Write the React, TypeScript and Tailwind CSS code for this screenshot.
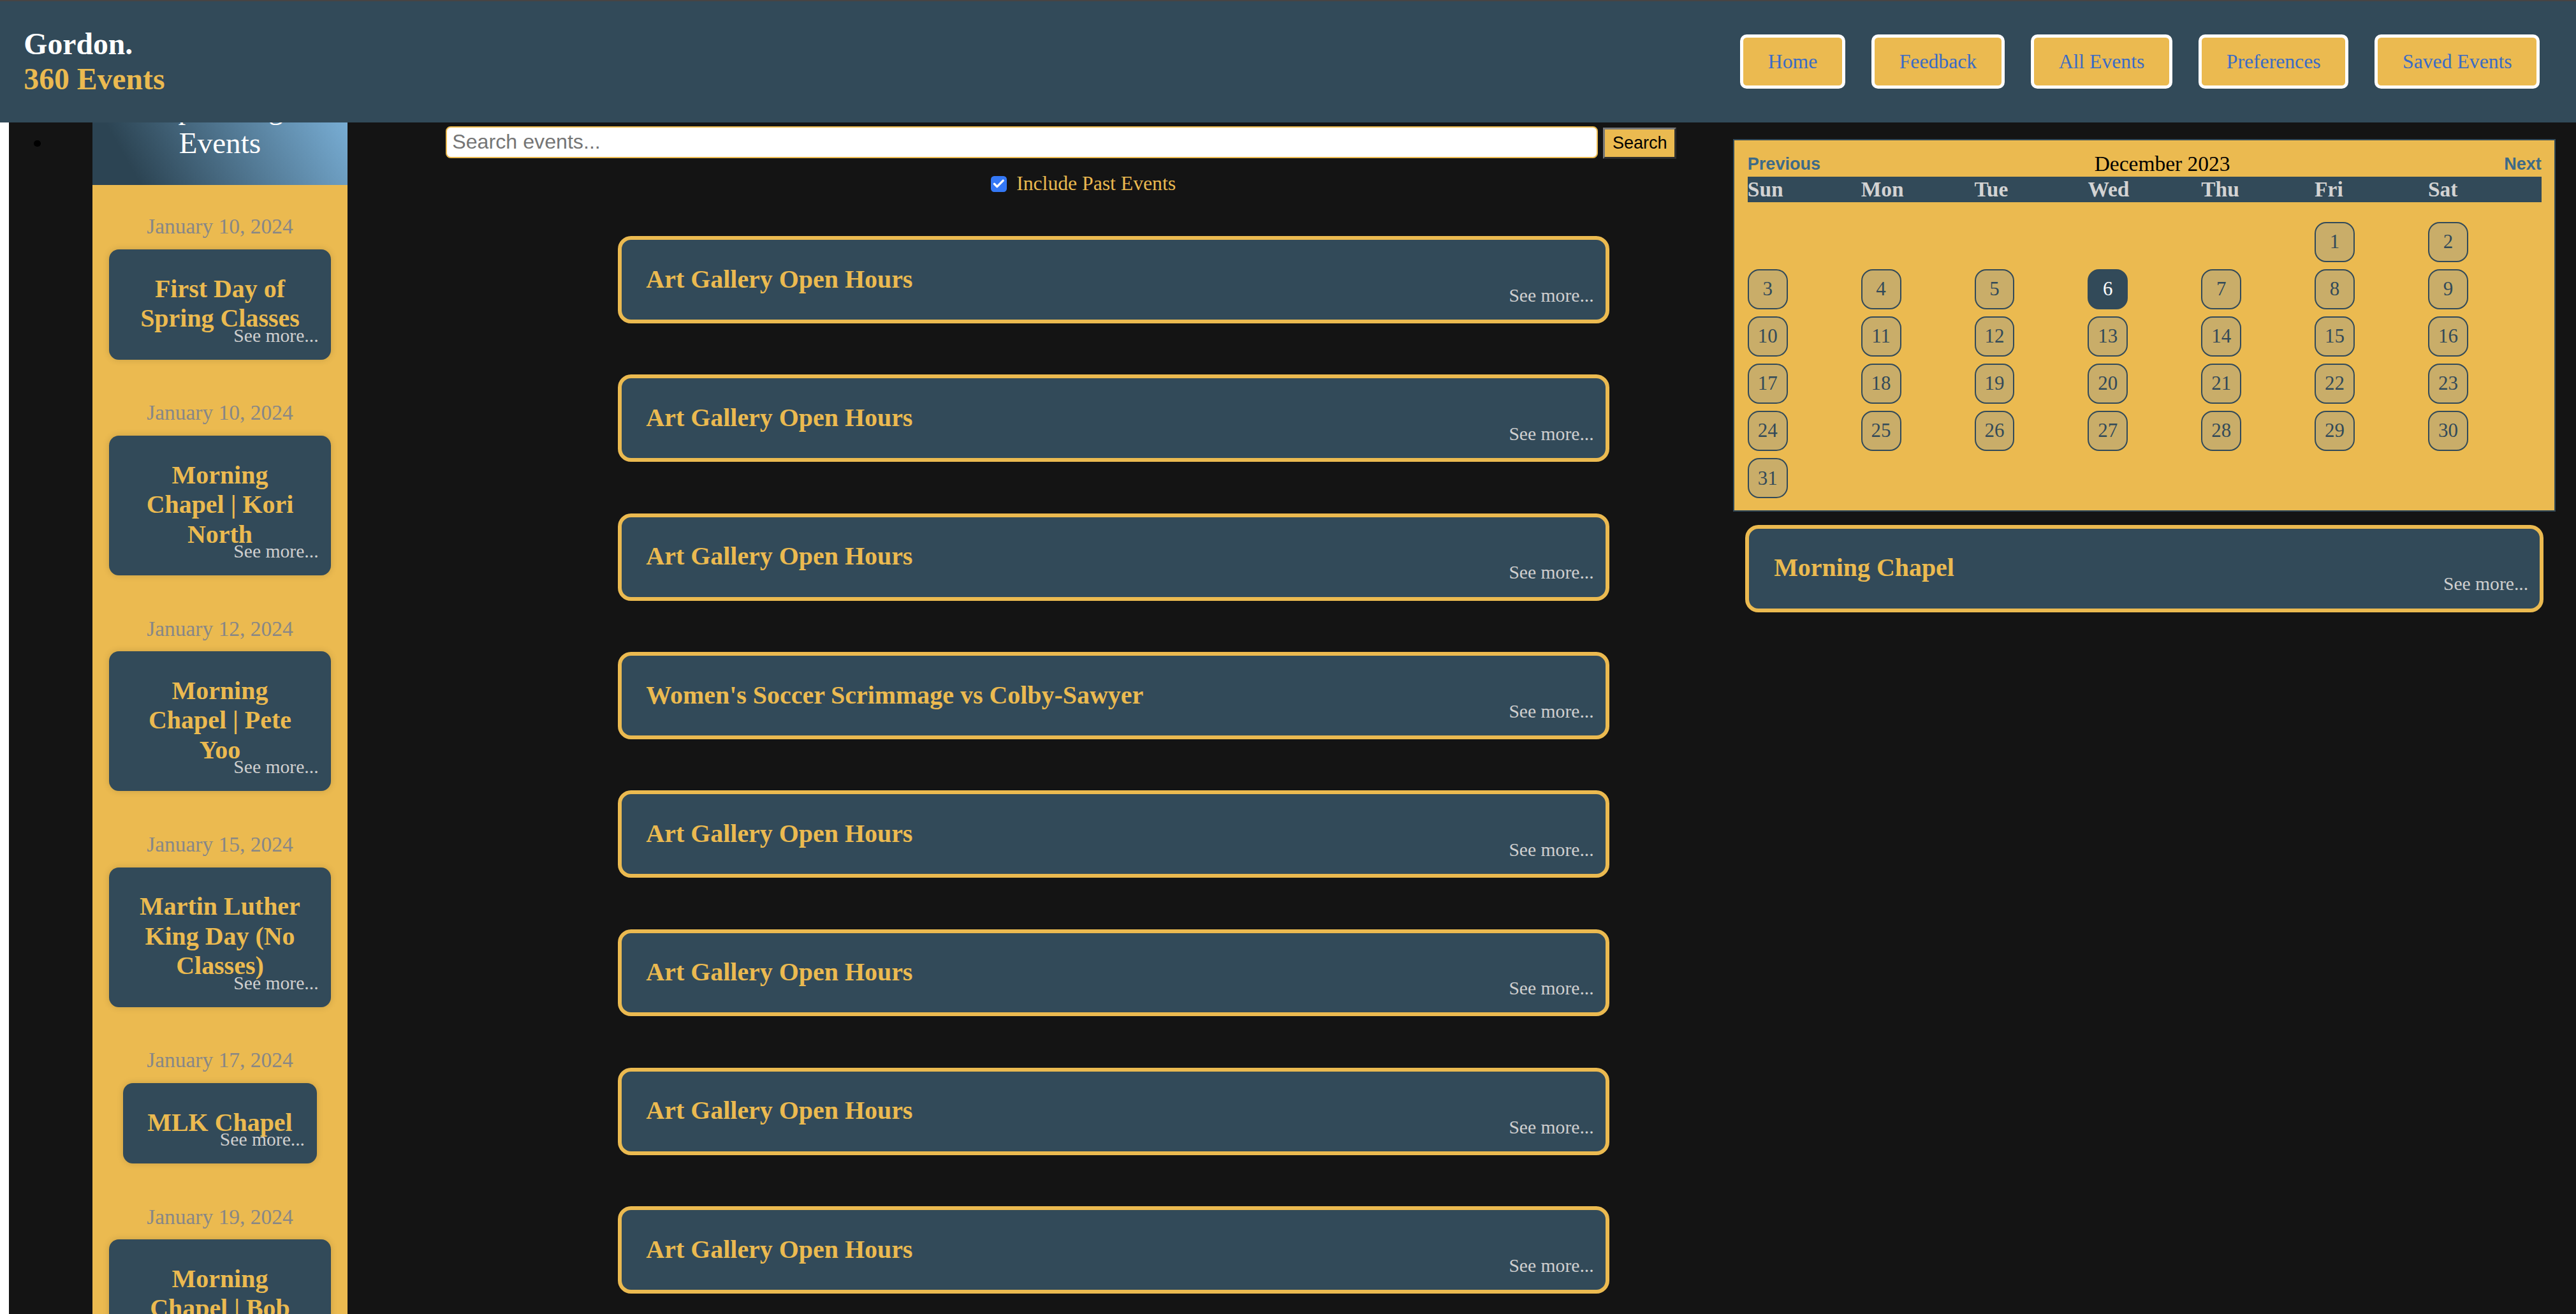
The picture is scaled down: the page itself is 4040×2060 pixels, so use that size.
import { Check } from "lucide-react";

const navLinks = ["Home", "Feedback", "All Events", "Preferences", "Saved Events"];

const upcoming = [
  { date: "January 10, 2024", title: "First Day of Spring Classes" },
  { date: "January 10, 2024", title: "Morning Chapel | Kori North" },
  { date: "January 12, 2024", title: "Morning Chapel | Pete Yoo" },
  { date: "January 15, 2024", title: "Martin Luther King Day (No Classes)" },
  { date: "January 17, 2024", title: "MLK Chapel" },
  { date: "January 19, 2024", title: "Morning Chapel | Bob Whitaker" },
  { date: "January 22, 2024", title: "Morning Chapel" },
];

const events = [
  "Art Gallery Open Hours",
  "Art Gallery Open Hours",
  "Art Gallery Open Hours",
  "Women's Soccer Scrimmage vs Colby-Sawyer",
  "Art Gallery Open Hours",
  "Art Gallery Open Hours",
  "Art Gallery Open Hours",
  "Art Gallery Open Hours",
  "Art Gallery Open Hours",
];

const weekdays = ["Sun", "Mon", "Tue", "Wed", "Thu", "Fri", "Sat"];

// December 2023 starts on a Friday
const cells: (number | null)[] = [
  ...Array(5).fill(null),
  ...Array.from({ length: 31 }, (_, i) => i + 1),
];

const SELECTED_DAY = 6;

function EventCard({ title }: { title: string }) {
  return (
    <div className="relative rounded-lg border-[2.5px] border-[#ebba50] bg-[#324a59] px-[15px] pt-[15px] pb-[15.5px]">
      <h3 className="text-[15.5px] font-bold leading-[18px] text-[#ebba50]">{title}</h3>
      <span className="absolute right-[7px] bottom-[8px] text-[11.5px] leading-[13px] text-[#cfcfcf]">
        See more...
      </span>
    </div>
  );
}

function UpcomingItem({ date, title, first }: { date: string; title: string; first: boolean }) {
  return (
    <div className={`flex flex-col items-center px-[10px] ${first ? "mt-[18px]" : "mt-[25px]"}`}>
      <p className="text-[13px] leading-[15px] text-[#878787]">{date}</p>
      <div className="relative mt-[6.3px] max-w-[135px] rounded-[6px] bg-[#324a59] px-[15px] pt-[15px] pb-[16px] text-center shadow-[0_0_4px_rgba(0,0,0,0.15)]">
        <h3 className="text-[15.5px] font-bold leading-[18px] text-[#ebba50]">{title}</h3>
        <span className="absolute right-[7.5px] bottom-[8px] text-[11.5px] leading-[13px] text-[#cfcfcf]">
          See more...
        </span>
      </div>
    </div>
  );
}

function Calendar() {
  return (
    <div className="border border-[#324a59] bg-[#ebba50] px-[8px] pt-[6.8px] pb-[7.3px]">
      <div className="flex h-[15px] items-center justify-between">
        <button className="font-['Liberation_Sans',sans-serif] text-[10.5px] font-bold text-[#3d6a88]">
          Previous
        </button>
        <span className="text-[13px] leading-[15px] text-black">December 2023</span>
        <button className="font-['Liberation_Sans',sans-serif] text-[10.5px] font-bold text-[#3d6a88]">
          Next
        </button>
      </div>
      <div className="grid h-[15.6px] grid-cols-7 bg-[#324a59] text-[13px] font-bold leading-[15.6px] text-[#d3d3d3]">
        {weekdays.map((d) => (
          <span key={d}>{d}</span>
        ))}
      </div>
      <div className="mt-[12.1px] grid grid-cols-7 gap-y-[4.35px]">
        {cells.map((d, i) =>
          d ? (
            <button
              key={i}
              className={`flex h-[24.4px] w-[24.4px] items-center justify-center rounded-[7px] border border-[#324a59] text-[12px] ${
                d === SELECTED_DAY ? "bg-[#324a59] text-white" : "bg-[#c9ad69] text-[#324a59]"
              }`}
            >
              {d}
            </button>
          ) : (
            <span key={i} />
          )
        )}
      </div>
    </div>
  );
}

export default function App() {
  return (
    <div className="h-screen overflow-hidden bg-[#141414]">
      <div className="relative h-[800px] overflow-hidden font-['Liberation_Serif',serif] [zoom:2.5765]">
        {/* Header */}
        <header className="absolute inset-x-0 top-0 z-10 flex h-[74.5px] items-center justify-between border-t border-[#474444] bg-[#324a59] pl-[14.5px] pr-[22px]">
          <div className="text-[18.5px] font-bold leading-[21.3px]">
            <div className="text-white">Gordon.</div>
            <div className="text-[#ebba50]">360 Events</div>
          </div>
          <nav className="flex gap-4">
            {navLinks.map((l) => (
              <button
                key={l}
                className="h-[33px] rounded-[4px] border-2 border-white bg-[#ebba50] px-[15px] text-[12.3px] text-[#3a6bc6]"
              >
                {l}
              </button>
            ))}
          </nav>
        </header>

        <div className="flex h-full">
          <div className="w-[5.4px] shrink-0 bg-white" />
          <div className="flex flex-1 bg-[#141414]">
            {/* list bullet */}
            <div className="w-[50.9px] shrink-0 pt-[85.3px] pl-[15.3px]">
              <div className="h-1 w-1 rounded-full bg-black" />
            </div>

            {/* Upcoming sidebar */}
            <aside className="mt-[40.6px] flex w-[155.2px] shrink-0 flex-col bg-[#ebba50]">
              <div className="bg-[linear-gradient(60deg,#2c4453_15%,#82bbe5)] py-[15px] text-center text-[18.3px] leading-[21px] text-white">
                Upcoming
                <br />
                Events
              </div>
              {upcoming.map((e, i) => (
                <UpcomingItem key={i} date={e.date} title={e.title} first={i === 0} />
              ))}
            </aside>

            {/* Main feed */}
            <main className="w-[843.5px] shrink-0 pt-[76.9px] pl-[60px]">
              <div className="flex items-start">
                <input
                  placeholder="Search events..."
                  className="h-[19.2px] w-[701px] rounded-[3px] border border-[#ebba50] bg-white px-[3px] font-['Liberation_Sans',sans-serif] text-[12.5px] text-black outline-none placeholder:text-[#757575]"
                />
                <button className="mt-[0.7px] ml-[3.4px] h-[19px] w-[44.6px] border-[1.5px] border-t-[#777777] border-r-[#2e2e2e] border-b-[#2e2e2e] border-l-[#777777] bg-[#ebba50] font-['Liberation_Sans',sans-serif] text-[10.5px] text-black">
                  Search
                </button>
              </div>
              <label className="mt-[8.3px] flex w-[776px] items-center justify-center gap-[5.8px] text-[12.3px] leading-[14px] text-[#ebba50]">
                <span className="flex h-[9.7px] w-[9.7px] items-center justify-center rounded-[2px] bg-[#3478f6]">
                  <Check className="h-[8px] w-[8px] text-white" strokeWidth={4} />
                </span>
                Include Past Events
              </label>
              <div className="mt-[24.7px] ml-[104.5px] flex w-[603.5px] flex-col gap-[31.2px]">
                {events.map((t, i) => (
                  <EventCard key={i} title={t} />
                ))}
              </div>
            </main>

            {/* Calendar */}
            <section className="w-[500.8px] shrink-0 pt-[84.8px]">
              <Calendar />
              <div className="mx-[7.5px] mt-[8px]">
                <EventCard title="Morning Chapel" />
              </div>
            </section>
          </div>
        </div>
      </div>
    </div>
  );
}
